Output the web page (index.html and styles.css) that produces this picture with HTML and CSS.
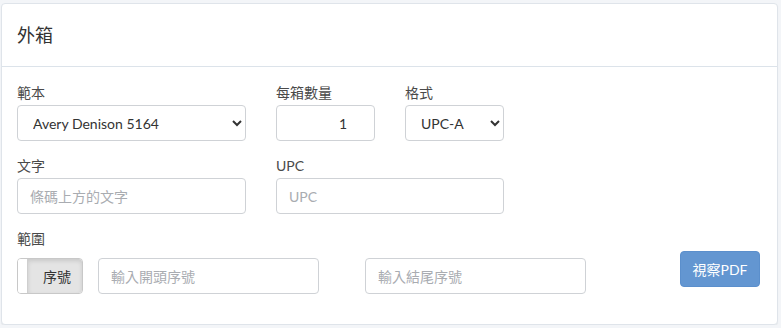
FILE: index.html
```html
<!DOCTYPE html>
<html lang="zh-Hant">
<head>
<meta charset="utf-8">
<title>外箱</title>
<link rel="stylesheet" href="styles.css">
</head>
<body>
<div class="card">
  <div class="card-header"><h2 class="title">外箱</h2></div>
  <div class="card-body">
    <div class="row">
      <div class="group col-wide">
        <label class="lbl">範本</label>
        <select class="control">
          <option>Avery Denison 5164</option>
        </select>
      </div>
      <div class="group col-narrow">
        <label class="lbl">每箱數量</label>
        <input class="control num" type="number" value="1">
      </div>
      <div class="group col-narrow">
        <label class="lbl">格式</label>
        <select class="control">
          <option>UPC-A</option>
        </select>
      </div>
    </div>
    <div class="row">
      <div class="group col-wide">
        <label class="lbl">文字</label>
        <input class="control" type="text" placeholder="條碼上方的文字">
      </div>
      <div class="group col-span">
        <label class="lbl">UPC</label>
        <input class="control" type="text" placeholder="UPC">
      </div>
    </div>
    <div class="row range-row">
      <div class="range-left">
        <label class="lbl">範圍</label>
        <div class="range-controls">
          <div class="toggle">
            <span class="handle"></span>
            <span class="off">序號</span>
          </div>
          <input class="control range-input first" type="text" placeholder="輸入開頭序號">
          <input class="control range-input second" type="text" placeholder="輸入結尾序號">
        </div>
      </div>
      <button class="btn" type="button">視察PDF</button>
    </div>
  </div>
</div>
</body>
</html>
```
FILE: styles.css
```css
* { box-sizing: border-box; }
html, body { margin: 0; padding: 0; }
body {
  background: #f3f5f8;
  font-family: Lato, "Noto Sans CJK TC", sans-serif;
  font-size: 14px;
  color: #444;
}
.card {
  margin: 3px 0 0 1px;
  width: 777px;
  background: #fff;
  border: 1px solid #dfe4ea;
  border-radius: 4px;
  box-shadow: 0 1px 1px rgba(0, 0, 0, 0.05);
}
.card-header {
  height: 63px;
  border-bottom: 1px solid #dce3ea;
  display: flex;
  align-items: center;
  padding: 0 15px;
}
.title {
  margin: 0;
  font-size: 18px;
  font-weight: 400;
  color: #333;
  line-height: 24px;
}
.card-body {
  padding: 16px 15px 30px;
}
.row {
  display: flex;
  gap: 30px;
  margin-bottom: 15px;
}
.group { display: flex; flex-direction: column; }
.col-wide { width: 229px; }
.col-narrow { width: 99px; }
.col-span { width: 228px; }
.lbl {
  display: block;
  line-height: 20px;
  margin-bottom: 2px;
  color: #4a4a4a;
}
.control {
  height: 36px;
  width: 100%;
  border: 1px solid #cfd2d6;
  border-radius: 4px;
  padding: 6px 12px;
  font-family: Lato, "Noto Sans CJK TC", sans-serif;
  font-size: 14px;
  color: #333;
  background: #fff;
}
.control::placeholder { color: #a9acb1; }
.num { text-align: right; }
select.control { padding: 6px 11px; }
.range-row { margin-bottom: 0; gap: 0; align-items: flex-start; }
.range-left { display: flex; flex-direction: column; }
.range-left .lbl { margin-bottom: 9px; }
.range-controls { display: flex; }
.toggle {
  width: 66px;
  height: 36px;
  border: 1px solid #c8c8c8;
  border-radius: 4px;
  display: flex;
  overflow: hidden;
  margin-right: 15px;
}
.handle {
  width: 10px;
  background: #fff;
  border-right: 1px solid #cfcfcf;
}
.off {
  flex: 1;
  background: #e4e4e4;
  box-shadow: inset 0 2px 4px rgba(0, 0, 0, 0.12);
  display: flex;
  align-items: center;
  justify-content: flex-end;
  padding-right: 11px;
  color: #333;
  border-radius: 0 3px 3px 0;
}
.range-input { width: 221px; }
.range-input.first { margin-right: 46px; }
.btn {
  margin-top: 22px;
  margin-left: 94px;
  width: 80px;
  height: 36px;
  border: 1px solid #5b8fcc;
  border-radius: 4px;
  background: #6396d1;
  color: #fff;
  font-family: Lato, "Noto Sans CJK TC", sans-serif;
  font-size: 14px;
  padding: 0;
}
```
